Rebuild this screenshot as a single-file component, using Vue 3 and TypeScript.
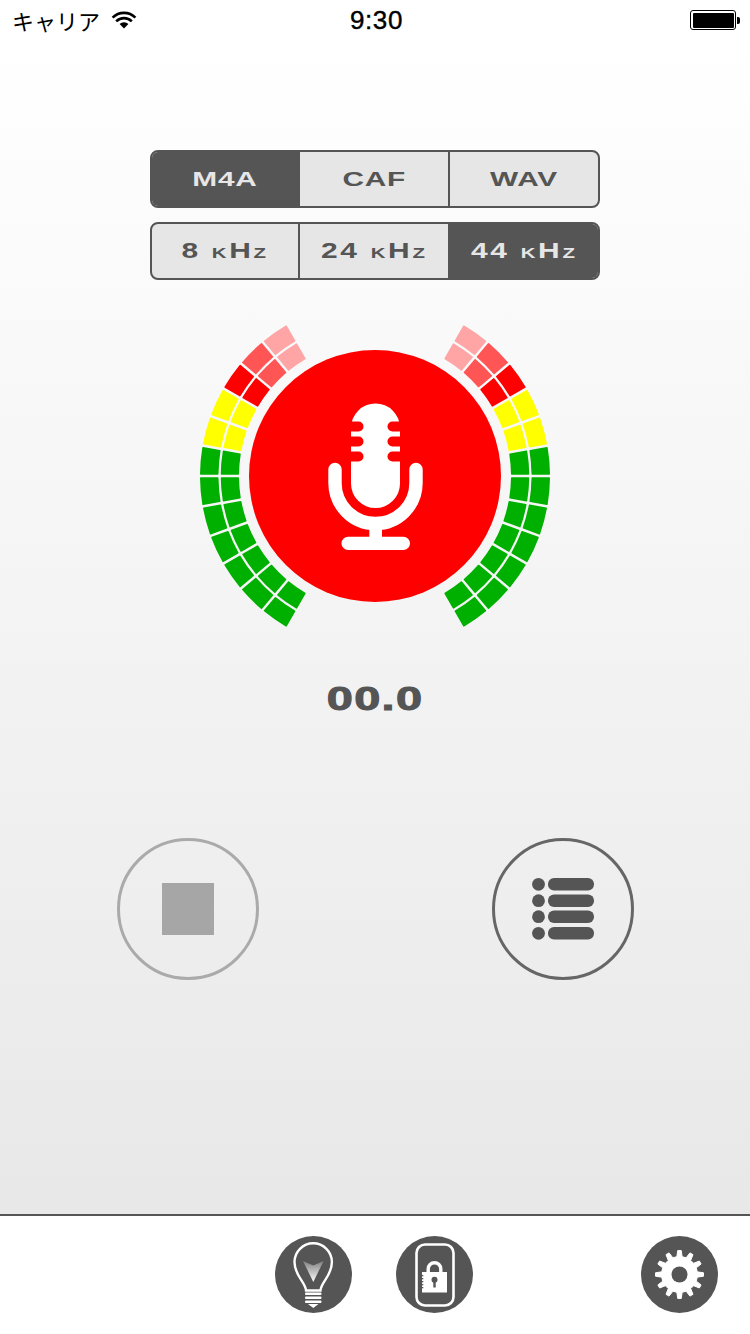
<template>
  <div class="recorder">
    <div class="status-bar">
      <div class="carrier">
        <span>キャリア</span>
        <svg class="wifi" width="26" height="20" viewBox="0 0 26 20">
          <path d="M1.6 7.6a16 16 0 0 1 22.8 0M5.2 11.4a11 11 0 0 1 15.6 0" fill="none" stroke="#000" stroke-width="2.6" />
          <path d="M8.6 14a6.3 6.3 0 0 1 8.8 0L13 18.6z" fill="#000" />
        </svg>
      </div>
      <div class="clock">9:30</div>
      <div class="battery">
        <div class="battery-body"><div class="battery-fill"></div></div>
        <div class="battery-nub"></div>
      </div>
    </div>

    <main class="main">
      <div class="picker" :class="group.name" v-for="group in pickers" :key="group.name">
        <div
          v-for="opt in group.options"
          :key="opt"
          class="picker-item"
          :class="{ active: opt === group.selected }"
        >
          <span class="picker-label">{{ opt }}</span>
        </div>
      </div>

      <svg class="meter" width="352" height="352" viewBox="199 300 352 352">
        <path
          v-for="(cell, i) in meterCells"
          :key="i"
          :d="cell.d"
          :fill="cell.color"
          :stroke="cell.color"
          stroke-width="1.5"
          stroke-linejoin="round"
        />
        <circle cx="375" cy="476" r="126" fill="#ff0000" />
        <!-- mic head with the three side notches -->
        <rect x="351" y="403.5" width="49" height="104.5" rx="24.5" fill="#fff" />
        <g fill="#ff0000">
          <rect x="345" y="421.5" width="18.5" height="10" rx="5" />
          <rect x="345" y="436.5" width="18.5" height="10" rx="5" />
          <rect x="345" y="451.5" width="18.5" height="10" rx="5" />
          <rect x="387.5" y="421.5" width="18.5" height="10" rx="5" />
          <rect x="387.5" y="436.5" width="18.5" height="10" rx="5" />
          <rect x="387.5" y="451.5" width="18.5" height="10" rx="5" />
        </g>
        <path d="M335 469.5V483a40.5 40.5 0 0 0 81 0V469.5" fill="none" stroke="#fff" stroke-width="13.4" stroke-linecap="round" />
        <rect x="369.3" y="526" width="12.7" height="14" fill="#fff" />
        <rect x="341.5" y="536.7" width="68.5" height="13.3" rx="6.6" fill="#fff" />
      </svg>

      <div class="timer"><span class="timer-text">00.0</span></div>

      <div class="controls">
        <button class="round-btn stop"><div class="stop-square"></div></button>
        <button class="round-btn list">
          <svg width="62" height="62" viewBox="0 0 62 62" fill="#555">
            <g v-for="y in [6.3, 22.7, 38.7, 55.3]" :key="y">
              <circle cx="8.5" :cy="y" r="6.4" />
              <rect x="18" :y="y - 6.3" width="46" height="12.6" rx="6" />
            </g>
          </svg>
        </button>
      </div>
    </main>

    <nav class="tab-bar">
      <button class="tab-btn bulb">
        <svg width="77" height="77" viewBox="0 0 77 77">
          <defs>
            <linearGradient id="dart" x1="0" y1="0" x2="0" y2="1">
              <stop offset="0" stop-color="#808080" />
              <stop offset="1" stop-color="#fff" />
            </linearGradient>
          </defs>
          <path d="M31 54.5C30.5 46 19.5 40 19.5 26a18.7 18.7 0 0 1 37.4 0C56.9 40 46 46 45.5 54.5Z" fill="none" stroke="#fff" stroke-width="2.4" />
          <path d="M28 25l10.3 4.5L48.6 25 38.3 46z" fill="url(#dart)" />
          <g fill="#fff">
            <rect x="30" y="56.5" width="16.5" height="2.4" rx="1" />
            <rect x="30" y="60.5" width="16.5" height="2.4" rx="1" />
            <rect x="30" y="64.5" width="16.5" height="2.4" rx="1" />
            <path d="M33 68h10.5l-5.2 4z" />
          </g>
        </svg>
      </button>
      <button class="tab-btn lock">
        <svg width="77" height="77" viewBox="0 0 77 77">
          <rect x="20.500" y="8.500" width="37" height="61" rx="8.500" fill="none" stroke="#fff" stroke-width="2.600" />
          <path d="M32.200 38v-5a6.300 6.300 0 0 1 12.600 0v5" fill="none" stroke="#fff" stroke-width="3.400" />
          <rect x="26" y="36" width="25" height="20.500" fill="#fff" />
          <g fill="#555">
            <circle cx="38.500" cy="43.800" r="3" />
            <rect x="37.300" y="44" width="2.400" height="7.500" />
            <rect x="26" y="39" width="1.300" height="1.300" />
            <rect x="26" y="42" width="1.300" height="1.300" />
            <rect x="26" y="45" width="1.300" height="1.300" />
            <rect x="26" y="48" width="1.300" height="1.300" />
            <rect x="26" y="51" width="1.300" height="1.300" />
          </g>
        </svg>
      </button>
      <button class="tab-btn gear">
        <svg width="77" height="77" viewBox="0 0 77 77">
          <path :d="gearPath" fill="#fff" stroke="#fff" stroke-width="1" stroke-linejoin="round" />
          <circle cx="38.500" cy="38.500" r="8" fill="#555" />
        </svg>
      </button>
    </nav>
  </div>
</template>

<script setup lang="ts">
import { computed } from 'vue';

const pickers = [
  { name: 'format', options: ['M4A', 'CAF', 'WAV'], selected: 'M4A' },
  { name: 'rate', options: ['8 kHz', '24 kHz', '44 kHz'], selected: '44 kHz' }
];

const CX = 375;
const CY = 476;
const GAP = 2; // half of the gap between cell paths, the stroke eats part of it
const RINGS = [
  [136.75, 153.5],
  [157.25, 174.25]
];

// from the bottom of the arc up: 60deg below horizontal to 60deg above it
const LEVELS = [
  '#00b000', '#00b000', '#00b000', '#00b000', '#00b000', '#00b000', '#00b000',
  '#ffff00', '#ffff00',
  '#ff0000', '#ff5555', '#ffa5a5'
];

const pt = (r: number, deg: number, side: number) => {
  const a = (deg * Math.PI) / 180;
  return `${(CX + side * r * Math.cos(a)).toFixed(2)} ${(CY + r * Math.sin(a)).toFixed(2)}`;
};

const sector = (r0: number, r1: number, from: number, to: number, side: number) => {
  const pad = (r: number) => (GAP / r) * (180 / Math.PI);
  const sweepOut = side < 0 ? 1 : 0;
  const sweepIn = side < 0 ? 0 : 1;
  return [
    `M${pt(r0, from - pad(r0), side)}`,
    `L${pt(r1, from - pad(r1), side)}`,
    `A${r1} ${r1} 0 0 ${sweepOut} ${pt(r1, to + pad(r1), side)}`,
    `L${pt(r0, to + pad(r0), side)}`,
    `A${r0} ${r0} 0 0 ${sweepIn} ${pt(r0, from - pad(r0), side)}`,
    'Z'
  ].join('');
};

const meterCells = computed(() => {
  const cells: { d: string; color: string }[] = [];
  for (const side of [-1, 1]) {
    for (const [r0, r1] of RINGS) {
      LEVELS.forEach((color, i) => {
        const from = 60 - i * 10;
        cells.push({ d: sector(r0, r1, from, from - 10, side), color });
      });
    }
  }
  return cells;
});

const gearPath = computed(() => {
  const teeth = 12;
  const rOut = 24;
  const rIn = 18;
  const c = 38.5;
  let d = '';
  for (let i = 0; i < teeth; i++) {
    const step = 360 / teeth;
    const a = i * step;
    const corners: [number, number][] = [
      [rIn, a - step * 0.28],
      [rOut, a - step * 0.14],
      [rOut, a + step * 0.14],
      [rIn, a + step * 0.28]
    ];
    for (const [r, deg] of corners) {
      const rad = (deg * Math.PI) / 180;
      d += `${d ? 'L' : 'M'}${(c + r * Math.cos(rad)).toFixed(2)} ${(c + r * Math.sin(rad)).toFixed(2)}`;
    }
  }
  return d + 'Z';
});
</script>

<style>
html,
body {
  margin: 0;
  padding: 0;
}
</style>

<style scoped>
.recorder {
  position: relative;
  width: 750px;
  height: 1334px;
  display: flex;
  flex-direction: column;
  font-family: "Liberation Sans", Arial, sans-serif;
  color: #555;
  background: linear-gradient(#fff 40px, #e8e8e8 1214px);
  overflow: hidden;
}

.status-bar {
  height: 40px;
  display: grid;
  grid-template-columns: 1fr auto 1fr;
  align-items: center;
  padding: 0 10px 0 12px;
  color: #000;
}

.carrier {
  display: flex;
  align-items: center;
  gap: 11px;
  font-family: "Noto Sans CJK JP", sans-serif;
  font-size: 22px;
  line-height: 40px;
}

.wifi {
  margin-top: -1px;
}

.clock {
  font-size: 26px;
  letter-spacing: 0.6px;
  -webkit-text-stroke: 0.4px #000;
  margin-left: 1px;
}

.battery {
  display: flex;
  align-items: center;
  justify-content: flex-end;
}

.battery-body {
  width: 46px;
  height: 20px;
  box-sizing: border-box;
  border: 1px solid #000;
  border-radius: 3px;
  padding: 1.5px;
}

.battery-fill {
  height: 100%;
  background: #000;
  border-radius: 1px;
}

.battery-nub {
  width: 3px;
  height: 7px;
  margin-left: 1px;
  background: #000;
  border-radius: 0 2px 2px 0;
}

.main {
  flex: 1;
  display: flex;
  flex-direction: column;
  align-items: center;
  padding-top: 110px;
}

.picker {
  width: 450px;
  height: 58px;
  box-sizing: border-box;
  display: grid;
  grid-template-columns: 148px 150px 148px;
  border: 2px solid #555;
  border-radius: 8px;
  background: #e6e6e6;
  overflow: hidden;
  margin-bottom: 14px;
}

.picker-item {
  box-sizing: border-box;
  display: flex;
  align-items: center;
  justify-content: center;
  border-right: 2px solid #555;
}

.picker-item:last-child {
  border-right: none;
}

.picker-item.active {
  background: #555;
  color: #e6e6e6;
}

.picker-label {
  display: inline-block;
  font-size: 21px;
  font-weight: 700;
  letter-spacing: 0.5px;
  transform: scaleX(1.42);
}

.rate .picker-label {
  font-size: 22px;
  font-variant-caps: small-caps;
  letter-spacing: 2px;
  transform: scaleX(1.36);
}

.meter {
  display: block;
  margin-top: 6px;
}

.timer {
  margin-top: 25px;
  height: 42px;
  line-height: 42px;
}

.timer-text {
  display: inline-block;
  font-size: 34px;
  font-weight: 700;
  letter-spacing: 1px;
  -webkit-text-stroke: 1px #555;
  transform: scaleX(1.38);
}

.controls {
  width: 100%;
  box-sizing: border-box;
  display: flex;
  justify-content: space-between;
  padding: 0 116px 0 117px;
  margin-top: 119px;
}

.round-btn {
  width: 142px;
  height: 142px;
  box-sizing: border-box;
  display: flex;
  align-items: center;
  justify-content: center;
  padding: 0;
  background: transparent;
  border-radius: 50%;
}

.round-btn.stop {
  border: 3px solid #aaa;
}

.round-btn.list {
  border: 3px solid #666;
}

.round-btn.list svg {
  overflow: visible;
  margin-left: -4px;
}

.stop-square {
  width: 52px;
  height: 52px;
  background: #a6a6a6;
}

.tab-bar {
  height: 120px;
  box-sizing: border-box;
  display: flex;
  align-items: center;
  padding: 0 32px 0 275px;
  border-top: 2px solid #555;
  background: #fff;
}

.tab-btn {
  width: 77px;
  height: 77px;
  padding: 0;
  border: none;
  border-radius: 50%;
  background: #555;
  margin-top: -2px;
}

.tab-btn svg {
  display: block;
}

.tab-btn.lock {
  margin-left: 44px;
}

.tab-btn.gear {
  margin-left: auto;
}
</style>
